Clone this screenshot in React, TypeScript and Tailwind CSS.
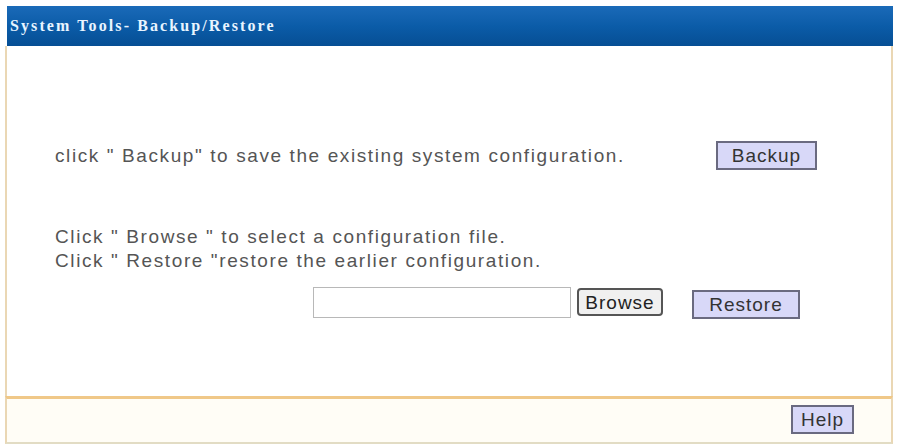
import React from 'react';

const btn =
  "border-2 border-[#6a6a80] bg-[#d8d8f8] text-[#333] text-[19px] tracking-[1px] leading-none flex items-center justify-center";

const App: React.FC = () => {
  return (
    <div className="w-[898px] h-[448px] bg-white pt-[6px] pl-[5px] font-['Liberation_Sans',Arial,sans-serif]">
      <div className="w-[888px] flex flex-col">
        {/* Header */}
        <div className="h-[40px] ml-[2px] bg-gradient-to-b from-[#1a6ab8] via-[#0b5ca8] to-[#064e94] flex items-center pl-[3px]">
          <span className="font-['Liberation_Serif',serif] font-bold text-[16px] tracking-[2.1px] text-[#e8f4ff]">
            System Tools- Backup/Restore
          </span>
        </div>

        {/* Body */}
        <div className="h-[350px] border-l-2 border-r-2 border-[#ead7b4] bg-white flex flex-col text-[#555] text-[19px] tracking-[1.6px]">
          <div className="mt-[95px] h-[29px] flex items-center">
            <span className="ml-[48px] w-[661px] mt-[2px]">
              click " Backup" to save the existing system configuration.
            </span>
            <div className={`${btn} w-[101px] h-[29px]`}>Backup</div>
          </div>

          <div className="mt-[55px] ml-[48px] leading-[24px]">
            <div>Click " Browse " to select a configuration file.</div>
            <div>Click " Restore "restore the earlier configuration.</div>
          </div>

          <div className="mt-[14px] flex items-start">
            <div className="ml-[306px] w-[258px] h-[31px] border border-[#b8b8b8] bg-white" />
            <div className="ml-[6px] mt-[1px] w-[86px] h-[28px] rounded-[4px] border-2 border-[#555] bg-[#f0f0f0] text-[#222] tracking-[1px] leading-none flex items-center justify-center">
              Browse
            </div>
            <div className={`${btn} ml-[29px] mt-[3px] w-[108px] h-[29px]`}>Restore</div>
          </div>
        </div>

        {/* Footer */}
        <div className="h-[48px] border-t-[3px] border-[#f0c888] border-l-2 border-r-2 border-b-2 border-l-[#ead7b4] border-r-[#ead7b4] border-b-[#e2dcc4] bg-[#fffdf6] flex items-center justify-end pr-[37px]">
          <div className={`${btn} w-[63px] h-[29px] mt-[-2px]`}>Help</div>
        </div>
      </div>
    </div>
  );
};

export default App;
